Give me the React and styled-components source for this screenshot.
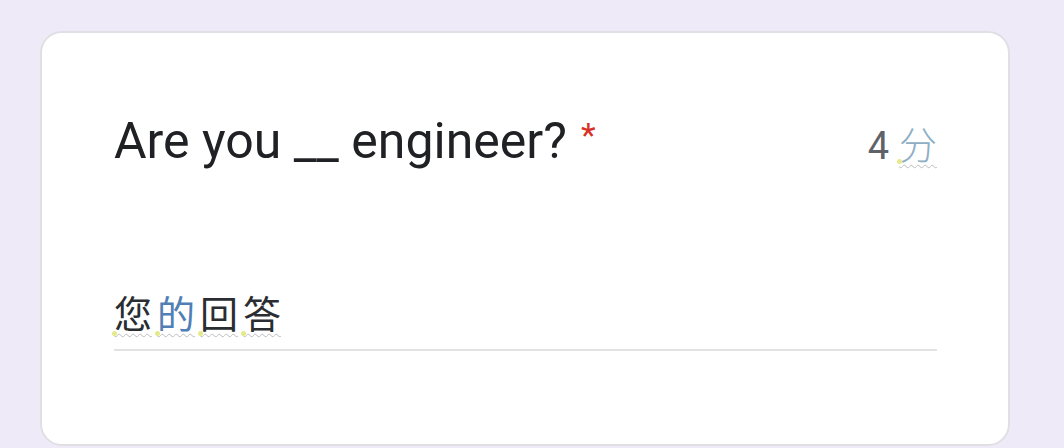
import React from "react";
import styled, { createGlobalStyle } from "styled-components";

const GlobalStyle = createGlobalStyle`
  html, body {
    margin: 0;
    padding: 0;
    background: #efeaf7;
  }
  body {
    font-family: Roboto, "Noto Sans", "Noto Sans CJK SC", sans-serif;
  }
`;

const Page = styled.div`
  width: 1064px;
  height: 448px;
  overflow: hidden;
  padding: 31px 54px 0 40px;
  box-sizing: border-box;
`;

const Card = styled.div`
  background: #ffffff;
  border: 2px solid #e0dfe3;
  border-radius: 22px;
  height: 415px;
  padding: 83px 71px 0 72px;
  box-sizing: border-box;
`;

const Header = styled.div`
  display: flex;
  justify-content: space-between;
  align-items: flex-start;
`;

const Title = styled.h2`
  margin: 0;
  font-family: Roboto, "Noto Sans", sans-serif;
  font-weight: 400;
  font-size: 50px;
  line-height: 1;
  color: #202124;
`;

const Required = styled.span`
  color: #d93025;
  margin-left: 14px;
  font-size: 34px;
  vertical-align: top;
  position: relative;
  top: 2px;
`;

const Points = styled.div`
  display: flex;
  align-items: baseline;
  gap: 10px;
  margin-top: 8px;
  font-size: 38px;
  line-height: 1;
  color: #5f6368;
`;

const Hand = styled.span`
  position: relative;
  font-family: "Noto Sans CJK SC", sans-serif;
  font-weight: ${(p) => p.$weight || 400};
  color: ${(p) => p.$color || "#2a2d31"};
  text-decoration: underline wavy #bdbdbd;
  text-decoration-thickness: 1px;
  text-underline-offset: 5px;

  &::before {
    content: "";
    position: absolute;
    left: -2px;
    bottom: -2px;
    width: 5px;
    height: 5px;
    border-radius: 50%;
    background: #e4e98a;
  }
`;

const Answer = styled.div`
  margin-top: 124px;
  padding-bottom: 15px;
  border-bottom: 2px solid #e2e2e2;
  display: flex;
  gap: 5px;
  font-size: 38px;
  line-height: 44px;
`;

export default function App() {
  return (
    <>
      <GlobalStyle />
      <Page>
        <Card>
          <Header>
            <Title>
              Are you __ engineer?<Required>*</Required>
            </Title>
            <Points>
              <span>4</span>
              <Hand $color="#8eaec4" $weight={300}>
                分
              </Hand>
            </Points>
          </Header>
          <Answer>
            <Hand>您</Hand>
            <Hand $color="#4f7fb5">的</Hand>
            <Hand>回</Hand>
            <Hand>答</Hand>
          </Answer>
        </Card>
      </Page>
    </>
  );
}
